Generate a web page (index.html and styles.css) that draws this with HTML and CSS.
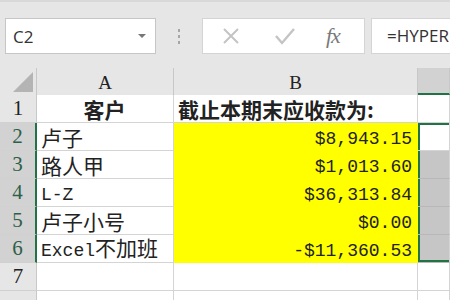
FILE: index.html
```html
<!DOCTYPE html>
<html lang="zh-CN">
<head>
    <meta charset="UTF-8">
    <meta name="viewport" content="width=device-width, initial-scale=1.0">
    <title>Excel - 应收款</title>
    <link rel="stylesheet" href="styles.css">
</head>
<body>
    <div class="toolbar">
        <div class="name-box">
            <span>C2</span>
            <span class="drop"></span>
        </div>
        <div class="grip"><i></i><i></i><i></i></div>
        <div class="fx-buttons">
            <svg class="btn" width="20" height="20" viewBox="0 0 20 20">
                <path d="M3 3 L17 17 M17 3 L3 17" stroke="#c4c4c4" stroke-width="2" fill="none"/>
            </svg>
            <svg class="btn" width="22" height="20" viewBox="0 0 22 20">
                <path d="M2 10 L8 17 L20 3" stroke="#c4c4c4" stroke-width="2.4" fill="none"/>
            </svg>
            <span class="fx">fx</span>
        </div>
        <div class="formula">=HYPER</div>
    </div>

    <div class="sheet">
        <!-- header row -->
        <div class="hd corner"><span class="tri"></span></div>
        <div class="hd col">A</div>
        <div class="hd col">B</div>
        <div class="hd col active-col"></div>

        <!-- row 1 -->
        <div class="rh">1</div>
        <div class="cell bold center cn">客户</div>
        <div class="cell bold cn">截止本期末应收款为:</div>
        <div class="cell"></div>

        <!-- row 2 -->
        <div class="rh sel">2</div>
        <div class="cell cn">卢子</div>
        <div class="cell yellow num">$8,943.15</div>
        <div class="cell active-cell"></div>

        <!-- row 3 -->
        <div class="rh sel">3</div>
        <div class="cell cn">路人甲</div>
        <div class="cell yellow num">$1,013.60</div>
        <div class="cell range"></div>

        <!-- row 4 -->
        <div class="rh sel">4</div>
        <div class="cell mono">L-Z</div>
        <div class="cell yellow num">$36,313.84</div>
        <div class="cell range"></div>

        <!-- row 5 -->
        <div class="rh sel">5</div>
        <div class="cell cn">卢子小号</div>
        <div class="cell yellow num">$0.00</div>
        <div class="cell range"></div>

        <!-- row 6 -->
        <div class="rh sel">6</div>
        <div class="cell"><span class="mixed"><span class="mono">Excel</span><span class="cn">不加班</span></span></div>
        <div class="cell yellow num">-$11,360.53</div>
        <div class="cell range range-end"></div>

        <!-- row 7 -->
        <div class="rh">7</div>
        <div class="cell"></div>
        <div class="cell"></div>
        <div class="cell"></div>

        <!-- row 8 -->
        <div class="rh"></div>
        <div class="cell"></div>
        <div class="cell"></div>
        <div class="cell"></div>
    </div>
</body>
</html>
```

FILE: styles.css
```css
html, body {
    margin: 0;
    height: 100%;
    overflow: hidden;
}
body {
    background: #e6e6e6;
    font-family: "Open Sans", "Noto Sans", sans-serif;
    color: #222;
}
.toolbar {
    display: flex;
    align-items: center;
    height: 68px;
    box-sizing: border-box;
    padding: 17px 0 15px 5px;
    border-top: 2px solid #d9d9d9;
}
.name-box {
    width: 151px;
    height: 36px;
    box-sizing: border-box;
    background: #fff;
    border: 1px solid #c6c6c6;
    display: flex;
    align-items: center;
    justify-content: space-between;
    padding: 0 9px 0 7px;
    font-size: 17px;
    color: #333;
}
.drop {
    width: 0;
    height: 0;
    border-left: 4px solid transparent;
    border-right: 4px solid transparent;
    border-top: 4px solid #777;
}
.grip {
    width: 46px;
    display: flex;
    flex-direction: column;
    align-items: center;
    gap: 3px;
}
.grip i {
    display: block;
    width: 2px;
    height: 3px;
    background: #a6a6a6;
}
.fx-buttons {
    width: 163px;
    height: 36px;
    box-sizing: border-box;
    background: #fff;
    border: 1px solid #d4d4d4;
    display: flex;
    align-items: center;
    padding: 0 0 0 18px;
}
.btn {
    margin-right: 33px;
}
.fx-buttons .btn + .btn {
    margin-right: 30px;
}
.fx {
    font-family: "Liberation Serif", serif;
    font-style: italic;
    font-size: 22px;
    color: #7a7a7a;
    letter-spacing: -1px;
}
.formula {
    margin-left: 6px;
    flex: 1;
    height: 36px;
    box-sizing: border-box;
    background: #fff;
    border: 1px solid #d4d4d4;
    border-right: none;
    padding-left: 15px;
    font-size: 17px;
    line-height: 34px;
    white-space: nowrap;
    overflow: hidden;
    color: #333;
}
.sheet {
    display: grid;
    grid-template-columns: 37px 137px 244px 1fr;
    grid-auto-rows: 28px;
    grid-template-rows: 27px;
    background: #fff;
}
.hd {
    background: #e6e6e6;
    border-right: 1px solid #c8c8c8;
    box-sizing: border-box;
    display: flex;
    align-items: flex-end;
    justify-content: center;
    font-family: "Liberation Serif", serif;
    font-size: 19px;
    padding-bottom: 1px;
}
.corner {
    justify-content: flex-end;
    padding: 0 3px 3px 0;
}
.tri {
    width: 0;
    height: 0;
    border-left: 20px solid transparent;
    border-bottom: 20px solid #b4b4b4;
}
.active-col {
    background: #d2d2d2;
    border-bottom: 2px solid #217346;
}
.rh {
    background: #e6e6e6;
    border-right: 1px solid #c8c8c8;
    border-bottom: 1px solid #d0d0d0;
    box-sizing: border-box;
    display: flex;
    align-items: center;
    justify-content: center;
    font-family: "Liberation Serif", serif;
    font-size: 21px;
    color: #222;
}
.rh.sel {
    background: #d2d2d2;
    border-right: 2px solid #217346;
    color: #2f5f48;
}
.cell {
    border-right: 1px solid #d4d4d4;
    border-bottom: 1px solid #d4d4d4;
    box-sizing: border-box;
    display: flex;
    align-items: center;
    padding: 1px 5px 0 4px;
    white-space: nowrap;
    overflow: visible;
    font-size: 21px;
}
.cn {
    font-family: "Noto Sans CJK SC", sans-serif;
    font-size: 21px;
}
.mono, .num {
    font-family: "Liberation Mono", monospace;
    font-size: 18px;
}
.cell.mono, .num {
    padding-top: 5px;
}
.mixed {
    line-height: 26px;
}
.bold {
    font-weight: bold;
}
.center {
    justify-content: center;
}
.num {
    justify-content: flex-end;
}
.yellow {
    background: #ffff00;
    border-color: #ffff00;
}
.active-cell {
    box-shadow: inset 2px 0 0 #217346, inset 0 2px 0 #217346;
}
.range {
    background: #c6c6c6;
    border-bottom-color: #b8b8b8;
    box-shadow: inset 2px 0 0 #217346;
}
.range-end {
    box-shadow: inset 2px 0 0 #217346, inset 0 -2px 0 #217346;
}
```
